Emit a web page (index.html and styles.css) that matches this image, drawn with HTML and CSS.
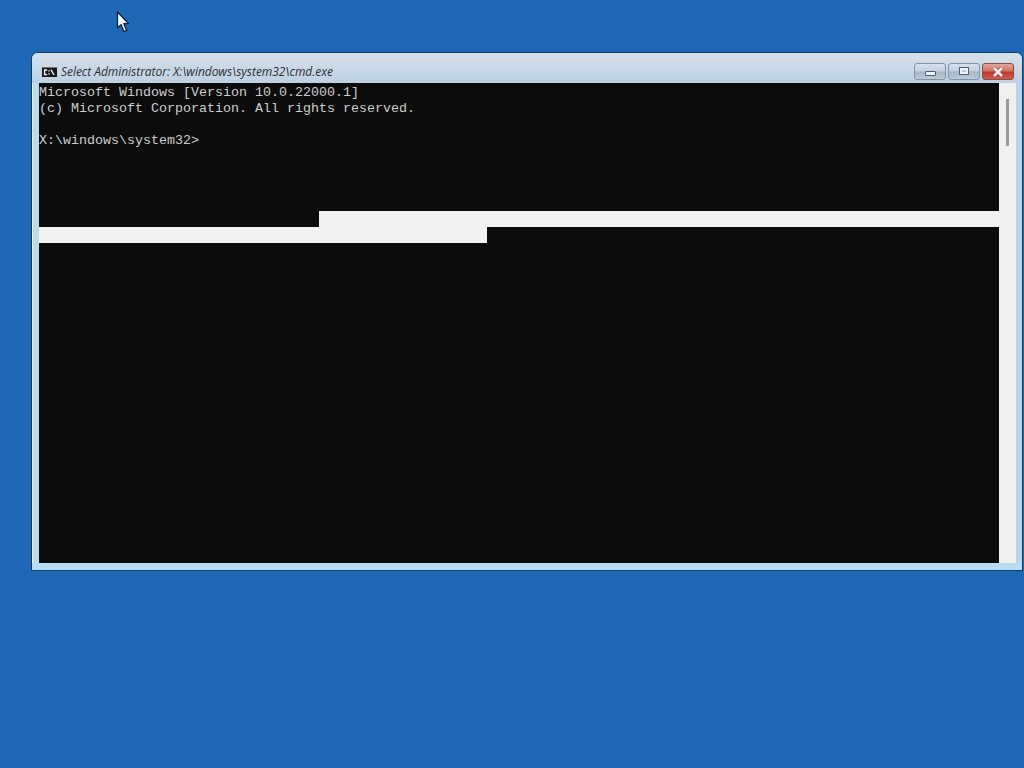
FILE: index.html
```html
<!DOCTYPE html>
<html lang="en">
<head>
<meta charset="utf-8">
<title>cmd.exe</title>
<link rel="stylesheet" href="styles.css">
</head>
<body>
<svg class="cursor" width="14" height="22" viewBox="0 0 14 22">
  <path d="M1.5 1 V17 L5 13.6 L8 20.5 L10.6 19.4 L7.7 12.6 H12.5 Z" fill="#f4f8fb" stroke="#0c1c2e" stroke-width="1.2" stroke-linejoin="round"/>
</svg>
<section class="window">
  <header class="titlebar">
    <svg class="app-icon" width="15" height="10" viewBox="0 0 15 10">
      <rect width="15" height="10" fill="#17181a"/>
      <rect width="15" height="1" fill="#74797e"/>
      <path d="M5.2 3 H2.6 V7.6 H5.2 M7 3.2 V4.4 M7 6.2 V7.4 M9 2.6 L12 8" fill="none" stroke="#f2f4f6" stroke-width="1.4"/>
    </svg>
    <span class="title">Select Administrator: X:\windows\system32\cmd.exe</span>
    <div class="controls">
      <button class="ctl ctl-min" aria-label="Minimize"><span class="glyph-min"></span></button>
      <button class="ctl ctl-max" aria-label="Maximize"><span class="glyph-max"></span></button>
      <button class="ctl ctl-close" aria-label="Close"><svg width="14" height="10" viewBox="0 0 14 10"><path d="M3 1 L11 9 M11 1 L3 9" stroke="#7a433c" stroke-width="3.8"/><path d="M3 1 L11 9 M11 1 L3 9" stroke="#f6efec" stroke-width="2.6"/></svg></button>
    </div>
  </header>
  <div class="client">
    <div class="console">
      <pre class="text">Microsoft Windows [Version 10.0.22000.1]
(c) Microsoft Corporation. All rights reserved.

X:\windows\system32&gt;</pre>
      <div class="sel sel-a"></div>
      <div class="sel sel-b"></div>
    </div>
    <div class="scrollbar"><div class="thumb"></div></div>
  </div>
</section>
</body>
</html>
```
FILE: styles.css
```css
html, body {
  margin: 0;
  height: 100%;
  overflow: hidden;
}
body {
  background: #1e67b4;
  position: relative;
}
.cursor {
  position: absolute;
  left: 116px;
  top: 11px;
}
.window {
  position: absolute;
  left: 31px;
  top: 52px;
  width: 992px;
  height: 519px;
  box-sizing: border-box;
  display: flex;
  flex-direction: column;
  border: 1px solid #123e6c;
  border-radius: 7px 7px 0 0;
  background: linear-gradient(90deg, #c4d9e6 0, #c6d8e8 50%, #b9d3e9 100%);
  padding: 0 6px 7px 7px;
  box-shadow: inset 0 -7px 0 #b8dcf2, inset 1px 0 0 #e6f0f6;
}
.titlebar {
  height: 30px;
  flex: none;
  display: flex;
  align-items: center;
  margin: 0 -6px 0 -7px;
  padding: 7px 8px 0 10px;
  box-sizing: border-box;
  border-radius: 6px 6px 0 0;
  background: linear-gradient(180deg, #d6e1ec 0, #ccdae7 40%, #bed0e2 100%);
}
.app-icon {
  flex: none;
}
.title {
  margin-left: 4px;
  font: italic 12px "Open Sans", "Liberation Sans", sans-serif;
  letter-spacing: -0.04px;
  color: #2a2d31;
  white-space: nowrap;
}
.controls {
  margin-left: auto;
  display: flex;
  gap: 2px;
}
.ctl {
  width: 32px;
  height: 17px;
  padding: 0;
  display: flex;
  align-items: center;
  justify-content: center;
  border: 1px solid #7f93a8;
  border-radius: 3px;
  background: linear-gradient(180deg, #d6e0ea 0, #c2d0de 48%, #a4b5c6 52%, #bccbd9 100%);
}
.ctl-close {
  border-color: #8f4a45;
  background: linear-gradient(180deg, #e2a59a 0, #d0776a 45%, #c0392c 55%, #cf5f50 100%);
}
.glyph-min {
  width: 9px;
  height: 3px;
  margin-top: 3px;
  background: #eef3f7;
  border: 1px solid #4c5c6e;
  border-radius: 1px;
}
.glyph-max {
  width: 4px;
  height: 2px;
  margin-top: -2px;
  border: 2px solid #eef3f7;
  outline: 1px solid #4c5c6e;
}
.client {
  flex: 1;
  min-height: 0;
  display: flex;
}
.console {
  width: 960px;
  flex: none;
  background: #0c0c0c;
  overflow: hidden;
}
.text {
  margin: 0 0 62px;
  padding-top: 2px;
  font: 13.33px/16px "Liberation Mono", monospace;
  color: #cccccc;
}
.sel {
  height: 16px;
  background: #f2f2f2;
}
.sel-a {
  margin-left: 280px;
}
.sel-b {
  width: 448px;
}
.scrollbar {
  flex: 1;
  background: #f0f0f0;
  display: flex;
  justify-content: center;
  padding-top: 16px;
}
.thumb {
  width: 3px;
  height: 47px;
  background: #9a9a9a;
}
```
